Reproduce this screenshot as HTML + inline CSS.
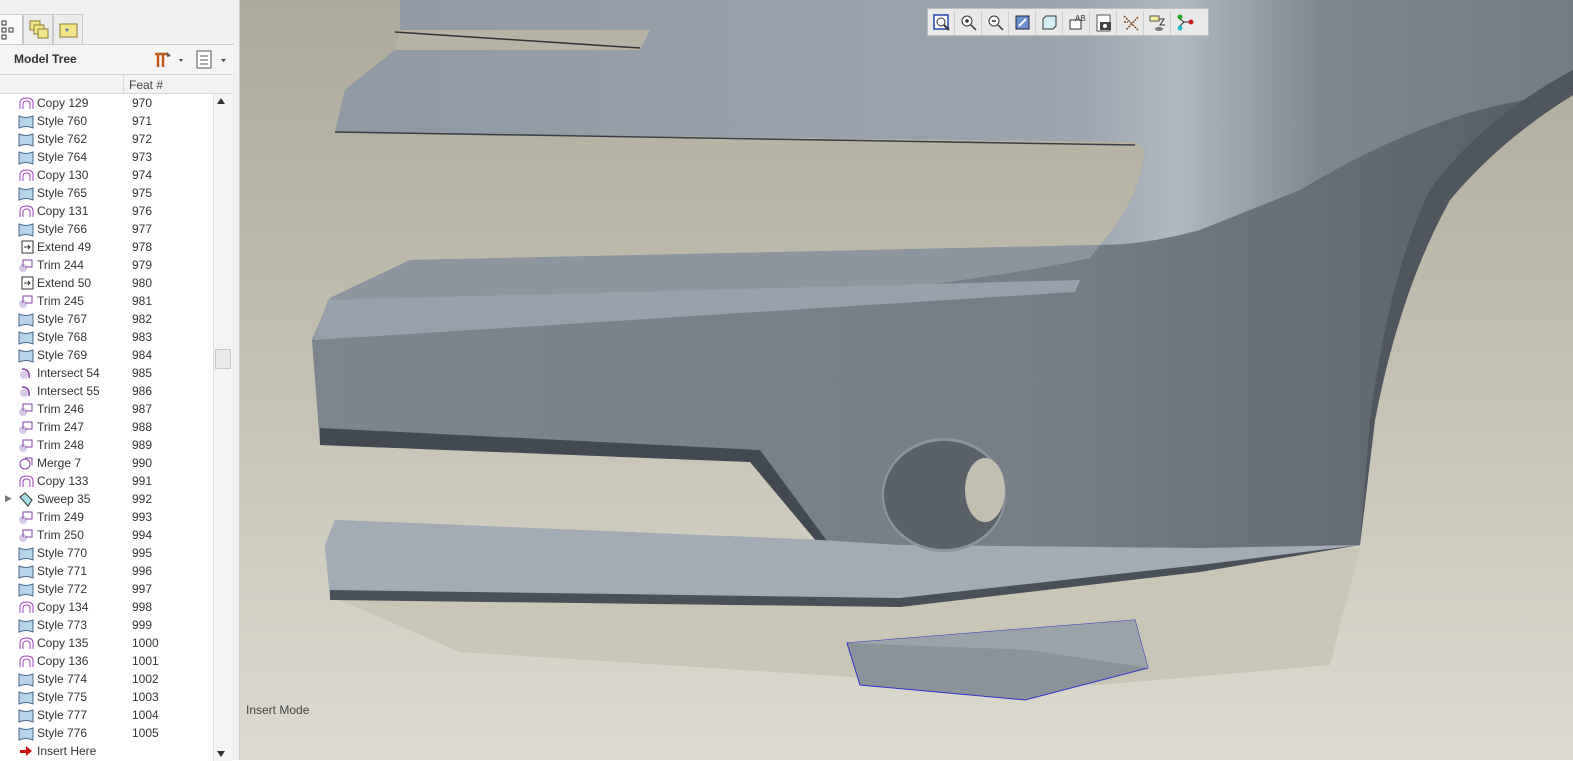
<!DOCTYPE html>
<html><head><meta charset="utf-8"><style>
*{margin:0;padding:0;box-sizing:border-box}
body{width:1573px;height:760px;overflow:hidden;position:relative;font-family:"Liberation Sans",sans-serif;background:#fff}
#left{position:absolute;left:0;top:0;width:240px;height:760px;background:#f0f0f0;border-right:1px solid #c8c8c8}
.tab{position:absolute;top:14px;height:30px;border:1px solid #c9c9c9;border-bottom:none;background:#ececec}
#hdr{position:absolute;left:0;top:44px;width:234px;height:30px;background:#f4f4f4;border-top:1px solid #c9c9c9}
#hdr span{position:absolute;left:14px;top:7px;font-size:12px;font-weight:bold;color:#333}
#tree{position:absolute;left:0;top:74px;width:232px;height:686px;background:#fff;border-top:1px solid #d0d0d0}
#colh{position:absolute;left:0;top:0;width:232px;height:19px;background:#f2f2f2;border-bottom:1px solid #d8d8d8;font-size:12px;color:#444}
#colh span{position:absolute;left:129px;top:3px}
#colh i{position:absolute;left:123px;top:0;width:1px;height:19px;background:#d8d8d8}
.row{position:absolute;left:0;height:18px;width:212px;font-size:12px;color:#333}
.row .n{position:absolute;left:37px;top:2px}
.row .f{position:absolute;left:132px;top:2px}
.row svg{position:absolute;left:18px;top:1px}
#sb{position:absolute;left:213px;top:19px;width:19px;height:667px;background:#f4f4f4;border-left:1px solid #e0e0e0}
#vp{position:absolute;left:240px;top:0;width:1333px;height:760px}
#tb{position:absolute;left:927px;top:8px;width:282px;height:28px;background:#e9e9e9;border:1px solid #bdbdbd}
#tb div{position:absolute;top:2px;width:25px;height:24px;border-right:1px solid #cfcfcf}
#im{position:absolute;left:246px;top:703px;font-size:12px;color:#444}
</style></head><body>
<div id="left">
 <div class="tab" style="left:-2px;width:25px;background:#fafafa"><svg width="20" height="28"><g fill="none" stroke="#333"><rect x="3" y="6" width="4" height="4"/><rect x="3" y="13" width="4" height="4"/><rect x="3" y="20" width="4" height="4"/><rect x="10" y="13" width="4" height="4"/></g></svg></div>
 <div class="tab" style="left:23px;width:30px"><svg width="30" height="28"><rect x="6" y="6" width="10" height="9" fill="#f2e58a" stroke="#8a7a30"/><rect x="10" y="10" width="10" height="9" fill="#f2e58a" stroke="#8a7a30"/><rect x="14" y="14" width="10" height="9" fill="#f2e58a" stroke="#8a7a30"/></svg></div>
 <div class="tab" style="left:53px;width:30px"><svg width="30" height="28"><rect x="6" y="9" width="17" height="13" fill="#f2e58a" stroke="#8a7a30"/><text x="11" y="20" font-size="10" fill="#2244cc">*</text></svg></div>
 <div id="hdr"><span>Model Tree</span>
  <svg style="position:absolute;left:152px;top:4px" width="82" height="22"><path d="M3 5h12M6 5v13M11 5v13" stroke="#c05a1a" stroke-width="2.5"/><path d="M15 3l4 4-4 1z" fill="#555"/><path d="M27 10l4 0-2 3z" fill="#444"/><rect x="45" y="2" width="14" height="17" fill="#fff" stroke="#555"/><path d="M48 7h8M48 11h8M48 15h8" stroke="#555"/><path d="M69 10l5 0-2.5 3z" fill="#444"/></svg>
 </div>
 <div id="tree">
  <div id="colh"><i></i><span>Feat #</span></div>
  <div id="rows"></div>
  <div id="sb"><div style="position:absolute;left:3px;top:4px;border:4px solid transparent;border-bottom:6px solid #333;border-top:none"></div>
   <div style="position:absolute;left:1px;top:255px;width:16px;height:20px;background:#e8e8e8;border:1px solid #c8c8c8"></div>
   <div style="position:absolute;left:3px;bottom:4px;border:4px solid transparent;border-top:6px solid #333;border-bottom:none"></div></div>
 </div>
</div>
<div id="vp">
<svg width="1333" height="760" viewBox="240 0 1333 760" style="position:absolute;left:0;top:0">
<defs>
<linearGradient id="bg" x1="0" y1="0" x2="0" y2="1"><stop offset="0" stop-color="#aeaa9a"/><stop offset="0.5" stop-color="#c4c1b3"/><stop offset="1" stop-color="#dddbd0"/></linearGradient>
<linearGradient id="bd" x1="0" y1="0" x2="1" y2="0"><stop offset="0" stop-color="#7d858e"/><stop offset="0.6" stop-color="#757d86"/><stop offset="0.85" stop-color="#626971"/><stop offset="1" stop-color="#555b62"/></linearGradient>
<linearGradient id="up" x1="0" y1="0" x2="1" y2="0"><stop offset="0" stop-color="#8f99a3"/><stop offset="0.6" stop-color="#9ba5af"/><stop offset="0.68" stop-color="#b0b9c2"/><stop offset="0.8" stop-color="#7e8690"/><stop offset="1" stop-color="#737b84"/></linearGradient>
</defs>
<rect x="240" y="0" width="1333" height="760" fill="url(#bg)"/>
<polygon points="340,600 1360,548 1330,665 1100,685 900,680 460,652" fill="#c9c6b6"/>
<path d="M312,340 L330,298 L410,260 L1100,245 Q1140,200 1145,150 L1135,142 L335,132 L345,90 L395,50 L640,50 L650,30 L400,30 L400,0 L1573,0 L1573,95 Q1500,140 1450,200 Q1400,290 1375,420 L1360,545 L1200,570 L900,605 L330,598 L325,545 L335,520 L820,540 L750,462 L320,445 Z" fill="url(#bd)"/>
<path d="M335,132 L345,90 L395,50 L640,50 L650,30 L400,30 L400,0 L1573,0 L1573,95 Q1450,100 1300,190 L1200,230 Q1145,245 1100,245 Q1140,200 1145,150 L1135,142 Z" fill="url(#up)"/>
<path d="M1573,70 Q1480,120 1430,190 Q1390,270 1370,420 L1360,545 L1375,420 Q1400,290 1450,200 Q1500,140 1573,95Z" fill="#50565d"/>
<path d="M312,340 L330,298 L410,260 L1100,245 L1090,258 Q900,300 312,340Z" fill="#8d969f"/>
<path d="M328,300 L1080,280 L1075,292 L314,340Z" fill="#97a1ab"/>
<path d="M320,428 L760,450 L830,545 L822,548 L750,462 L320,445Z" fill="#434950"/>
<path d="M335,520 L820,540 L900,545 L1200,548 L1360,545 L1200,570 L900,605 L330,598 L325,545Z" fill="#a3abb5"/>
<path d="M330,590 L900,598 L1200,565 L1360,545 L1200,572 L900,607 L330,600Z" fill="#4a5057"/>
<path d="M400,30 L650,30 L640,50 L395,50Z" fill="#b6b2a4"/>
<path d="M395,32 L640,48" stroke="#333" stroke-width="1.5"/>
<path d="M335,132 L1135,145" stroke="#3a3f45" stroke-width="1.5"/>
<ellipse cx="944" cy="495" rx="62" ry="57" fill="#8c949d"/>
<ellipse cx="944" cy="495" rx="60" ry="54" fill="#5a6168"/>
<ellipse cx="985" cy="490" rx="20" ry="32" fill="#c2bfb1"/>
<polygon points="847,643 1135,620 1148,668 1025,700 860,685" fill="#8a929a" stroke="#3333cc" stroke-width="1"/>
<polygon points="847,643 1135,620 1148,668 1030,650" fill="#9aa2aa"/>
</svg>
<div id="tb" style="left:687px">
 <div style="left:2px"><svg width="24" height="24"><rect x="4" y="4" width="14" height="14" fill="#fff" stroke="#2244aa" stroke-width="1.5"/><circle cx="11" cy="11" r="4" fill="none" stroke="#333"/><path d="M14 14l5 5" stroke="#333" stroke-width="2"/></svg></div>
 <div style="left:29px"><svg width="24" height="24"><circle cx="10" cy="10" r="5" fill="#fff" stroke="#333"/><path d="M8 10h4M10 8v4M14 14l5 5" stroke="#333" stroke-width="1.5"/></svg></div>
 <div style="left:56px"><svg width="24" height="24"><circle cx="10" cy="10" r="5" fill="#fff" stroke="#333"/><path d="M8 10h4M14 14l5 5" stroke="#333" stroke-width="1.5"/></svg></div>
 <div style="left:83px"><svg width="24" height="24"><rect x="5" y="5" width="13" height="13" fill="#6a8fd0" stroke="#223"/><path d="M8 15l7-7" stroke="#fff" stroke-width="2"/></svg></div>
 <div style="left:110px"><svg width="24" height="24"><path d="M5 8l3-3h10v10l-3 3H5z" fill="#cfeff5" stroke="#333"/></svg></div>
 <div style="left:137px"><svg width="24" height="24"><rect x="5" y="9" width="11" height="9" fill="#fff" stroke="#333"/><text x="10" y="10" font-size="8" fill="#333">AB</text></svg></div>
 <div style="left:164px"><svg width="24" height="24"><rect x="5" y="4" width="13" height="16" fill="#fff" stroke="#555"/><rect x="8" y="11" width="11" height="8" fill="#444"/><circle cx="13" cy="15" r="2" fill="#fff"/></svg></div>
 <div style="left:191px"><svg width="24" height="24"><path d="M5 5l14 14M19 6L7 19M5 11l4 0" stroke="#7a4a20" stroke-width="1.5" stroke-dasharray="2 1"/></svg></div>
 <div style="left:218px"><svg width="24" height="24"><rect x="4" y="5" width="9" height="5" fill="#f3ec9a" stroke="#555"/><path d="M13 8h5l-4 6h5" stroke="#333" fill="none"/><ellipse cx="13" cy="18" rx="4" ry="2" fill="#777"/></svg></div>
 <div style="left:245px;border:none"><svg width="24" height="24"><circle cx="7" cy="6" r="2.5" fill="#2a2"/><circle cx="7" cy="17" r="2.5" fill="#2bc"/><circle cx="18" cy="11" r="2.5" fill="#c22"/><path d="M7 8l4 3h5M7 15l4-4" stroke="#333" fill="none"/></svg></div>
</div>
</div>
<div id="im">Insert Mode</div>
<script>
var items=[["c","Copy 129",970],["s","Style 760",971],["s","Style 762",972],["s","Style 764",973],["c","Copy 130",974],["s","Style 765",975],["c","Copy 131",976],["s","Style 766",977],["e","Extend 49",978],["t","Trim 244",979],["e","Extend 50",980],["t","Trim 245",981],["s","Style 767",982],["s","Style 768",983],["s","Style 769",984],["i","Intersect 54",985],["i","Intersect 55",986],["t","Trim 246",987],["t","Trim 247",988],["t","Trim 248",989],["m","Merge 7",990],["c","Copy 133",991],["w","Sweep 35",992],["t","Trim 249",993],["t","Trim 250",994],["s","Style 770",995],["s","Style 771",996],["s","Style 772",997],["c","Copy 134",998],["s","Style 773",999],["c","Copy 135",1000],["c","Copy 136",1001],["s","Style 774",1002],["s","Style 775",1003],["s","Style 777",1004],["s","Style 776",1005],["h","Insert Here",""]];
var ic={
c:'<path d="M2 14V8Q2 3 9 3Q15 3 15 8V14M5 14V9Q5 6 9 6Q12 6 12 9V14" fill="none" stroke="#a040c0"/>',
s:'<path d="M1 3Q8 6 15 3V15Q8 12 1 15Z" fill="#b8d4ec" stroke="#4a6a8a"/>',
e:'<rect x="4" y="2" width="11" height="12" fill="#fff" stroke="#333"/><path d="M6 8h6M10 6l2 2-2 2" stroke="#333" fill="none"/>',
t:'<circle cx="5" cy="11" r="4" fill="#d8c8e8"/><path d="M5 10V3h9v7H7" fill="none" stroke="#8040a0"/>',
i:'<circle cx="6" cy="10" r="4" fill="#d8c8e8"/><path d="M4 4Q12 4 11 13" fill="none" stroke="#8040a0" stroke-width="1.5"/>',
m:'<circle cx="7" cy="9" r="5" fill="none" stroke="#8040a0"/><path d="M7 3h7v7" fill="none" stroke="#8040a0"/>',
w:'<path d="M2 6L7 2L14 9L10 15Z" fill="#a8e0e8" stroke="#333"/>',
h:'<path d="M2 7h6V3l6 5-6 5V10H2z" fill="#d01010"/>'};
var h='';items.forEach(function(it,k){var y=19+k*18;h+='<div class="row" style="top:'+y+'px">'+(it[0]=='w'?'<span style="position:absolute;left:5px;top:3px;font-size:9px;color:#777">&#9654;</span>':'')+'<svg width="17" height="16">'+ic[it[0]]+'</svg><span class="n">'+it[1]+'</span><span class="f">'+it[2]+'</span></div>';});
document.getElementById('rows').innerHTML=h;
</script>
</body></html>
